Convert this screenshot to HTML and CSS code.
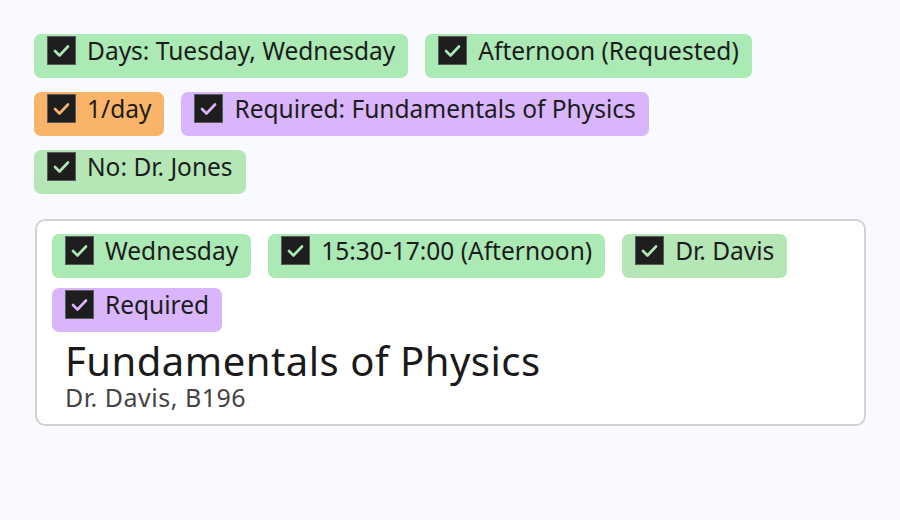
FILE: index.html
```html
<!DOCTYPE html>
<html>
<head>
<meta charset="utf-8">
<link rel="stylesheet" href="styles.css">
</head>
<body>
<div class="page">
  <div class="rows">
    <div class="row">
      <span class="chip green"><span class="box"><svg viewBox="0 0 27 27"><path d="M7 14 L11.5 18.5 L20 9.5"/></svg></span><span class="label">Days: Tuesday, Wednesday</span></span>
      <span class="chip green"><span class="box"><svg viewBox="0 0 27 27"><path d="M7 14 L11.5 18.5 L20 9.5"/></svg></span><span class="label">Afternoon (Requested)</span></span>
    </div>
    <div class="row">
      <span class="chip orange"><span class="box"><svg viewBox="0 0 27 27"><path d="M7 14 L11.5 18.5 L20 9.5"/></svg></span><span class="label">1/day</span></span>
      <span class="chip purple"><span class="box"><svg viewBox="0 0 27 27"><path d="M7 14 L11.5 18.5 L20 9.5"/></svg></span><span class="label">Required: Fundamentals of Physics</span></span>
    </div>
    <div class="row">
      <span class="chip green2"><span class="box"><svg viewBox="0 0 27 27"><path d="M7 14 L11.5 18.5 L20 9.5"/></svg></span><span class="label">No: Dr. Jones</span></span>
    </div>
  </div>
  <div class="card">
    <div class="rows inner">
      <div class="row">
        <span class="chip green"><span class="box"><svg viewBox="0 0 27 27"><path d="M7 14 L11.5 18.5 L20 9.5"/></svg></span><span class="label">Wednesday</span></span>
        <span class="chip green"><span class="box"><svg viewBox="0 0 27 27"><path d="M7 14 L11.5 18.5 L20 9.5"/></svg></span><span class="label">15:30-17:00 (Afternoon)</span></span>
        <span class="chip green2"><span class="box"><svg viewBox="0 0 27 27"><path d="M7 14 L11.5 18.5 L20 9.5"/></svg></span><span class="label">Dr. Davis</span></span>
      </div>
      <div class="row">
        <span class="chip purple"><span class="box"><svg viewBox="0 0 27 27"><path d="M7 14 L11.5 18.5 L20 9.5"/></svg></span><span class="label">Required</span></span>
      </div>
    </div>
    <div class="info">
      <div class="title">Fundamentals of Physics</div>
      <div class="sub">Dr. Davis, B196</div>
    </div>
  </div>
</div>
</body>
</html>
```

FILE: styles.css
```css
html, body {
  margin: 0;
  padding: 0;
  background: #f9faff;
}
body {
  font-family: "Noto Sans", "Open Sans", sans-serif;
  color: #1c1c1c;
}
.page {
  padding: 34px 34px 0 34px;
}
.rows {
  display: flex;
  flex-direction: column;
  gap: 14px;
}
.rows.inner {
  gap: 10px;
}
.row {
  display: flex;
  gap: 17px;
  align-items: flex-start;
}
.chip {
  display: inline-flex;
  align-items: flex-start;
  height: 44px;
  box-sizing: border-box;
  padding: 0 13px;
  border-radius: 7px;
  gap: 11px;
  font-size: 24.5px;
  line-height: 33px;
  white-space: nowrap;
}
.chip.green { background: #abe9b5; --chk: #abe9b5; }
.chip.green2 { background: #b5e6b6; --chk: #b5e6b6; }
.chip.orange { background: #f9b469; --chk: #f9b469; }
.chip.purple { background: #d9b6fc; --chk: #d9b6fc; }
.box {
  width: 29px;
  height: 29px;
  margin-top: 2px;
  box-sizing: border-box;
  background: #1e1e1e;
  border: 1px solid #5a5a5a;
  display: block;
  flex: none;
}
.box svg {
  display: block;
  width: 27px;
  height: 27px;
}
.box path {
  fill: none;
  stroke: var(--chk);
  stroke-width: 2.6;
  stroke-linecap: round;
  stroke-linejoin: round;
}
.label {
  display: block;
}
.card {
  margin-top: 25px;
  margin-left: 1px;
  width: 831px;
  box-sizing: border-box;
  background: #ffffff;
  border: 2px solid #d2d2d2;
  border-radius: 10px;
  padding: 13px 16px 14px 15px;
}
.info {
  padding-left: 13px;
  margin-top: 6px;
}
.title {
  font-size: 40px;
  line-height: 46px;
  letter-spacing: 0.5px;
  color: #1a1a1a;
}
.sub {
  font-size: 25px;
  line-height: 26px;
  letter-spacing: 0.5px;
  color: #444444;
}
```
